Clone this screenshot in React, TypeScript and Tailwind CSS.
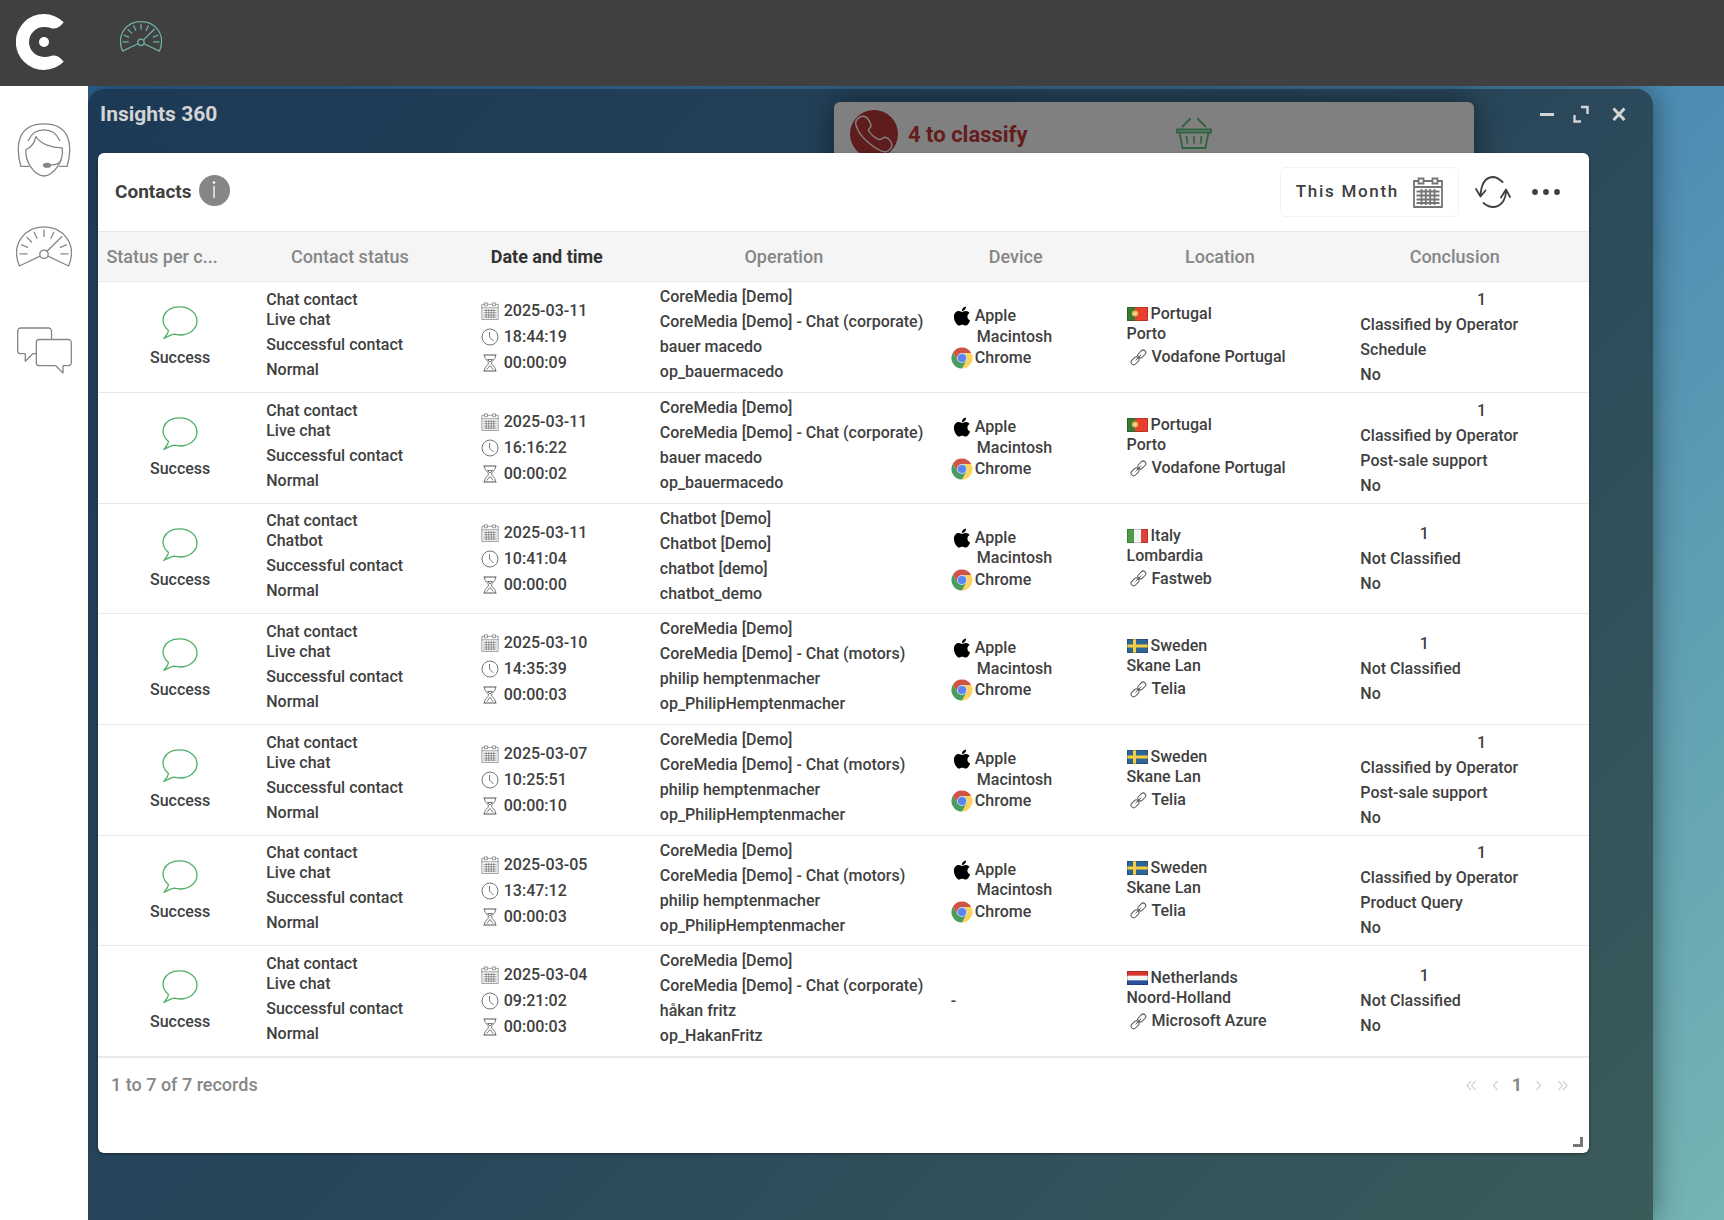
import React from 'react';
import { FaApple } from 'react-icons/fa';

type Country = 'pt' | 'it' | 'se' | 'nl';

interface Contact {
  channel: string;
  date: string;
  time: string;
  duration: string;
  operation: string[];
  device: boolean;
  country: Country;
  region: string;
  network: string;
  conclusion: string[];
}

const countryNames: Record<Country, string> = {
  pt: 'Portugal',
  it: 'Italy',
  se: 'Sweden',
  nl: 'Netherlands'
};

const corporate = ['CoreMedia [Demo]', 'CoreMedia [Demo] - Chat (corporate)'];
const motors = ['CoreMedia [Demo]', 'CoreMedia [Demo] - Chat (motors)'];
const bauer = [...corporate, 'bauer macedo', 'op_bauermacedo'];
const philip = [...motors, 'philip hemptenmacher', 'op_PhilipHemptenmacher'];

const contacts: Contact[] = [
  { channel: 'Live chat', date: '2025-03-11', time: '18:44:19', duration: '00:00:09', operation: bauer, device: true, country: 'pt', region: 'Porto', network: 'Vodafone Portugal', conclusion: ['Classified by Operator', 'Schedule', 'No'] },
  { channel: 'Live chat', date: '2025-03-11', time: '16:16:22', duration: '00:00:02', operation: bauer, device: true, country: 'pt', region: 'Porto', network: 'Vodafone Portugal', conclusion: ['Classified by Operator', 'Post-sale support', 'No'] },
  { channel: 'Chatbot', date: '2025-03-11', time: '10:41:04', duration: '00:00:00', operation: ['Chatbot [Demo]', 'Chatbot [Demo]', 'chatbot [demo]', 'chatbot_demo'], device: true, country: 'it', region: 'Lombardia', network: 'Fastweb', conclusion: ['Not Classified', 'No'] },
  { channel: 'Live chat', date: '2025-03-10', time: '14:35:39', duration: '00:00:03', operation: philip, device: true, country: 'se', region: 'Skane Lan', network: 'Telia', conclusion: ['Not Classified', 'No'] },
  { channel: 'Live chat', date: '2025-03-07', time: '10:25:51', duration: '00:00:10', operation: philip, device: true, country: 'se', region: 'Skane Lan', network: 'Telia', conclusion: ['Classified by Operator', 'Post-sale support', 'No'] },
  { channel: 'Live chat', date: '2025-03-05', time: '13:47:12', duration: '00:00:03', operation: philip, device: true, country: 'se', region: 'Skane Lan', network: 'Telia', conclusion: ['Classified by Operator', 'Product Query', 'No'] },
  { channel: 'Live chat', date: '2025-03-04', time: '09:21:02', duration: '00:00:03', operation: [...corporate, 'håkan fritz', 'op_HakanFritz'], device: false, country: 'nl', region: 'Noord-Holland', network: 'Microsoft Azure', conclusion: ['Not Classified', 'No'] }
];

const Logo = () => (
  <svg width="48" height="56" viewBox="16 14 48 56" fill="#fff">
    <path d="M63.7 22.3A28 28 0 1 0 63.7 61.7C60 57 56.5 54.3 51.5 55.8C48 57 46 57 44 57A15 15 0 0 1 44 27C46 27 48 27 51.5 28.2C56.5 29.7 60 27 63.7 22.3Z" />
    <circle cx="44" cy="42" r="5" />
  </svg>
);

const GaugeIcon = ({ className, strokeWidth }: { className: string; strokeWidth: number }) => (
  <svg className={className} viewBox="0 0 56 41" fill="none" stroke="currentColor" strokeWidth={strokeWidth} strokeLinecap="round" strokeLinejoin="round">
    <path d="M24 30.2L3.4 40C-6 17 10 .8 28 .8S62 17 52.6 40L32 30.2" />
    <circle cx="28" cy="28.3" r="4.2" />
    <path d="M31 25.3L45.8 10.8M4 27.8h7M45 27.8h7M5.6 18.8l6 2.5M50.4 18.8l-6 2.5M10.8 11.4l4.8 4.6M18.2 6.2l2.8 6M28 4v6.6M37.8 6.2l-2.8 6" />
  </svg>
);

const AgentIcon = () => (
  <svg className="h-[54px] w-[54px]" viewBox="0 0 54 54" fill="none" stroke="currentColor" strokeWidth="1.3" strokeLinejoin="round" strokeLinecap="round">
    <path d="M12 43.3H3.8C-2 22 1 .8 27 .8S56 22 50.2 43.3H42.5" />
    <path d="M11.3 17.5C14.5 10 20 6.8 27 6.8S39.5 10 42.7 17.5" />
    <path d="M19 13.5C17.5 20 14.5 24.5 9 26.5C7.5 39 18 53 27 53S47 39 45.3 24.8C35 25 24 21.5 19 13.5Z" />
    <path d="M33 42.2C39 41.5 42.5 41 44.2 37" />
    <ellipse cx="30" cy="42.3" rx="3.5" ry="1.9" fill="currentColor" />
  </svg>
);

const ChatsIcon = () => (
  <svg className="h-[47px] w-[55px]" viewBox="0 0 55 47" fill="none" stroke="currentColor" strokeWidth="1.3" strokeLinejoin="round">
    <path d="M34.5 12.5V4a3 3 0 0 0-3-3H3.7a3 3 0 0 0-3 3v19.7a3 3 0 0 0 3 3H8.3V34.3L15.8 26.7H19.3" />
    <path d="M22.3 12.5H51.3a3 3 0 0 1 3 3V35.7a3 3 0 0 1-3 3H46V46L38.8 38.7H22.3a3 3 0 0 1-3-3V15.5a3 3 0 0 1 3-3Z" />
  </svg>
);

const PhoneIcon = () => (
  <svg className="size-12" viewBox="0 0 48 48" fill="none">
    <circle cx="24" cy="24" r="24" fill="#5e1c1c" />
    <path d="M6 11C8 8 11 5.5 14.5 6.5C17.5 7.5 20 12 21 15C21.5 18 18 18.5 18.5 20.5C20 24 25 28 29 29.5C32 30 33 26.5 36 27.5C39 28.5 41.5 32 42 35C41.5 39 38 41.5 35 42C27 41 11 28 7.5 19C6 16 5 13.5 6 11Z" stroke="#808080" strokeWidth="1.5" />
  </svg>
);

const BasketIcon = () => (
  <svg className="h-8 w-9" viewBox="0 0 36 32" fill="none" stroke="#2f6340" strokeWidth="1.8">
    <path d="M6 10L14.5 1.5M30 10L21.5 1.5M1 12.5h34v3H1zM3.5 15.5L6.5 31H29.5L32.5 15.5M10.5 19l.8 7.5M18 19v7.5M25.5 19l-.8 7.5" />
  </svg>
);

const CalendarIcon = ({ className, strokeWidth = 1 }: { className: string; strokeWidth?: number }) => (
  <svg className={className} viewBox="0 0 30 31" fill="none" stroke="currentColor" strokeWidth={strokeWidth}>
    <path d="M5.5 4H1v26h28V4h-4.5M10.5 4h9M1 10h28" />
    <path d="M5.5 1.5h5v5h-5zM19.5 1.5h5v5h-5z" />
    <path d="M3.5 14.5h23M3.5 18.5h23M3.5 22.5h23M8.5 12v16M12.8 12v16M17.2 12v16M21.5 12v16M3.5 26h23" />
  </svg>
);

const RefreshIcon = () => (
  <svg className="h-8 w-9" viewBox="0 0 36 32" fill="none" stroke="currentColor" strokeWidth="1.8" strokeLinecap="round" strokeLinejoin="round">
    <path d="M27.5 6C24 2.5 20.5 1 17.5 1C10.5 1.5 6 8 5.5 20.5M1 13L5.5 20.5L10.5 14.5M8.5 27C12 30 14.5 31 18 31C25 31 31 25 31 14M26 21.5L31 13.5L35 21" />
  </svg>
);

const BubbleIcon = () => (
  <svg className="h-[34px] w-9" viewBox="0 0 36 34" fill="none" stroke="#4fae68" strokeWidth="1.3" strokeLinejoin="round">
    <path d="M6.5 24.5C-3 17.5 -.5 .8 18 .8C27.5 .8 35 7 35 15S27.5 29 18 29C15.8 28.8 14 28.5 12.3 28.2C8.5 29 5 30.8 1.8 32.5C3 30.5 6 28.5 6.5 24.5Z" />
  </svg>
);

const ClockIcon = () => (
  <svg className="size-[18px]" viewBox="0 0 18 18" fill="none" stroke="#666" strokeWidth="0.9">
    <circle cx="9" cy="9" r="8" />
    <path d="M8.5 4v5l4 4" />
  </svg>
);

const HourglassIcon = () => (
  <svg className="size-[18px]" viewBox="0 0 18 18" fill="none" stroke="#555" strokeWidth="0.8">
    <path d="M3.5 1V2C3.5 5.5 7.5 7 7.5 9S3.500 12.500 3.500 16V17M14.500 1V2C14.500 5.500 10.500 7 10.500 9S14.500 12.500 14.500 16V17M5.800 15.500L9 11.500L12.200 15.500M6.500 5.500h5L9 8Z" />
    <path d="M2.5 1h13M2.5 17h13" strokeWidth="1.2" />
  </svg>
);

const LinkIcon = () => (
  <svg className="size-[17px]" viewBox="0 0 17 17" fill="none" stroke="#555" strokeWidth="1">
    <rect x="-4.5" y="-2.6" width="9" height="5.2" rx="2.6" transform="translate(11.8 5) rotate(-45)" />
    <rect x="-4.5" y="-2.6" width="9" height="5.2" rx="2.6" transform="translate(5 11.8) rotate(-45)" />
    <path d="M5.5 11.3L11.3 5.6" />
  </svg>
);

const ChromeIcon = () => (
  <svg className="size-[22px]" viewBox="1 1 46 46">
    <path fill="#cf5446" d="M4.9 13A22 22 0 0 1 43.1 13.5H24L15 29Z" />
    <path fill="#fbd35d" d="M43.1 13.5A22 22 0 0 1 23 46L33 29L24 13.5Z" />
    <path fill="#4a9c5f" d="M24 46A22 22 0 0 1 4.9 13L15 29L33 29Z" />
    <circle cx="24" cy="24" r="10.5" fill="#c9d8f5" />
    <circle cx="24" cy="24" r="8.5" fill="#5885ee" />
  </svg>
);

const Flag = ({ country }: { country: Country }) => (
  <svg className="h-3.5 w-[21px]" viewBox="0 0 21 15" preserveAspectRatio="none" aria-hidden="true">
    {country === 'pt' && (
      <>
        <path fill="#e8402f" d="M0 0h21v15H0z" />
        <path fill="#3a7a33" d="M0 0h8v15H0z" />
        <circle cx="8" cy="7" r="3.2" fill="#e9b84a" />
        <circle cx="8" cy="7" r="1.5" fill="#f0d9d0" />
      </>
    )}
    {country === 'it' && (
      <>
        <path fill="#f4f4f4" d="M0 0h21v15H0z" />
        <path fill="#4b9c45" d="M0 0h7v15H0z" />
        <path fill="#e0403a" d="M14 0h7v15h-7z" />
      </>
    )}
    {country === 'se' && (
      <>
        <path fill="#2f6595" d="M0 0h21v15H0z" />
        <path fill="#f5cf3f" d="M6 0h3v15H6zM0 6h21v3H0z" />
      </>
    )}
    {country === 'nl' && (
      <>
        <path fill="#f4f4f4" d="M0 0h21v15H0z" />
        <path fill="#d8352f" d="M0 0h21v5H0z" />
        <path fill="#2b4f9a" d="M0 10h21v5H0z" />
      </>
    )}
    <path d="M.5.5h20v14H.5z" fill="none" stroke="#000" strokeOpacity=".2" />
  </svg>
);

const ContactRow: React.FC<{ contact: Contact }> = ({ contact }) => (
  <tr className="h-[111px] border-b border-[#e9e9e9] nth-[3n]:h-[110px]">
    <td className="pl-9">
      <div className="flex flex-col items-center gap-2">
        <BubbleIcon />
        <span>Success</span>
      </div>
    </td>
    <td className="pl-10">
      <p>Chat contact</p>
      <p className="mb-[5px]">{contact.channel}</p>
      <p className="mb-[5px]">Successful contact</p>
      <p className="mb-[5px]">Normal</p>
    </td>
    <td className="pl-[7px]">
      <p className="flex h-[26px] items-center gap-[5px]">
        <CalendarIcon className="size-[18px] text-[#555]" />
        {contact.date}
      </p>
      <p className="flex h-[26px] items-center gap-[5px]">
        <ClockIcon />
        {contact.time}
      </p>
      <p className="flex h-[26px] items-center gap-[5px]">
        <HourglassIcon />
        {contact.duration}
      </p>
    </td>
    <td className="pl-10">
      {contact.operation.map((line, i) => (
        <p key={i} className="mb-[5px]">{line}</p>
      ))}
    </td>
    <td className="pl-[3px]">
      {contact.device ? (
        <>
          <p className="flex h-[21px] items-center gap-0.5">
            <FaApple className="size-[22px] text-black" />
            Apple
          </p>
          <p className="h-[21px] pl-[26px]">Macintosh</p>
          <p className="flex h-[21px] items-center gap-0.5">
            <ChromeIcon />
            Chrome
          </p>
        </>
      ) : (
        <p>-</p>
      )}
    </td>
    <td className="pl-[43px]">
      <p className="flex items-center gap-[3px]">
        <Flag country={contact.country} />
        {countryNames[contact.country]}
      </p>
      <p>{contact.region}</p>
      <p className="my-[3px] flex items-center gap-[5px] pl-[3px]">
        <LinkIcon />
        {contact.network}
      </p>
    </td>
    <td className="pt-[5px] pl-1">
      <div className="inline-block align-middle">
        <p className="mb-[5px] pr-8 text-right">1</p>
        {contact.conclusion.map((line) => (
          <p key={line} className="mb-[5px]">{line}</p>
        ))}
      </div>
    </td>
  </tr>
);

const ContactsPanel = () => (
  <section className="relative mr-16 ml-2.5 rounded-md bg-white text-[#404040] shadow-[0_1px_3px_rgba(0,0,0,0.4)]">
    <header className="flex h-[78px] items-center justify-between pr-7 pl-[17px]">
      <div className="flex items-center gap-[7px]">
        <h2 className="text-[19px] font-bold">Contacts</h2>
        <button type="button" aria-label="About contacts" className="mb-1 flex size-[31px] items-center justify-center rounded-full bg-[#868686]">
          <svg width="4" height="18" viewBox="0 0 4 18" fill="#fff">
            <path d="M1.4 5h1.300v12H1.400z" />
            <circle cx="2" cy="1.5" r="1.3" />
          </svg>
        </button>
      </div>
      <div className="flex items-center">
        <button type="button" className="flex h-[50px] items-center gap-3.5 rounded-md border border-[#f3f3f3] px-[15px]">
          <span className="text-[17px] font-medium tracking-widest">This Month</span>
          <CalendarIcon className="h-[31px] w-[30px] text-[#757575]" strokeWidth={1.8} />
        </button>
        <button type="button" aria-label="Refresh" className="ml-4">
          <RefreshIcon />
        </button>
        <button type="button" aria-label="More options" className="ml-5">
          <svg width="30" height="8" viewBox="0 0 30 8" fill="currentColor">
            <circle cx="4" cy="4" r="2.9" />
            <circle cx="15" cy="4" r="2.9" />
            <circle cx="26" cy="4" r="2.9" />
          </svg>
        </button>
      </div>
    </header>

    <table className="w-full table-fixed border-collapse text-left text-base leading-5 font-medium">
      <thead>
        <tr className="h-[50px] border-y border-[#e9e9e9] bg-[#f5f5f5] text-lg text-[#868686] [&>th]:text-center [&>th]:font-medium">
          <th className="w-[8.6%] whitespace-nowrap">Status per c...</th>
          <th className="w-[16.6%]">Contact status</th>
          <th className="w-[9.8%] text-[#333]">
            <span className="font-bold">Date and time</span>
          </th>
          <th className="w-[22%]">Operation</th>
          <th className="w-[9.1%]">Device</th>
          <th className="w-[18.3%]">Location</th>
          <th className="pr-9">Conclusion</th>
        </tr>
      </thead>
      <tbody>
        {contacts.map((contact, i) => (
          <ContactRow key={i} contact={contact} />
        ))}
      </tbody>
    </table>

    <footer className="flex h-24 items-start justify-between border-t border-[#e9e9e9] pt-[15px] pr-[21px] pl-[13px] text-lg leading-6 text-[#868686]">
      <span className="font-medium">1 to 7 of 7 records</span>
      <nav aria-label="Pages" className="flex items-center text-[#d5d5d5]">
        <button type="button" aria-label="First page" className="mr-4">
          <svg width="10" height="12" viewBox="0 0 10 12" fill="none" stroke="currentColor" strokeWidth="1.3"><path d="M5 2L1 6.5L5 11M9.5 2L5.5 6.5L9.5 11" /></svg>
        </button>
        <button type="button" aria-label="Previous page" className="mr-3.5">
          <svg width="6" height="12" viewBox="0 0 6 12" fill="none" stroke="currentColor" strokeWidth="1.3"><path d="M5.5 2L1.5 6.5L5.5 11" /></svg>
        </button>
        <button type="button" aria-current="page" className="mr-3.5 font-bold text-[#868686]">1</button>
        <button type="button" aria-label="Next page" className="mr-4">
          <svg width="6" height="12" viewBox="0 0 6 12" fill="none" stroke="currentColor" strokeWidth="1.3"><path d="M.5 2L4.5 6.5L.5 11" /></svg>
        </button>
        <button type="button" aria-label="Last page">
          <svg width="10" height="12" viewBox="0 0 10 12" fill="none" stroke="currentColor" strokeWidth="1.3"><path d="M.5 2L4.5 6.5L.5 11M5 2L9 6.5L5 11" /></svg>
        </button>
      </nav>
    </footer>
    {/* Resize handle */}
    <span className="absolute right-1.5 bottom-1.5 size-2.5 border-r-[3px] border-b-[3px] border-[#777]"></span>
  </section>
);

const App: React.FC = () => (
  <div className="flex min-h-screen flex-col bg-[linear-gradient(135deg,#2b5f92,#4e8db3_61%,#76b5b3)] font-['Roboto',sans-serif]">
    <header className="relative z-10 flex h-[86px] items-center bg-[#404040]">
      <a href="#" aria-label="Home" className="flex w-[88px] justify-center pr-2 pb-0.5">
        <Logo />
      </a>
      <button type="button" aria-label="Insights" className="mb-3.5 ml-8 text-[#6fb0a6]">
        <GaugeIcon className="h-[31px] w-[42px]" strokeWidth={1.7} />
      </button>
    </header>

    <div className="flex flex-1">
      <nav className="relative z-10 flex w-[88px] shrink-0 flex-col items-center bg-white pt-[37px] text-[#868686]">
        <a href="#" aria-label="Agents" className="mb-[49px]"><AgentIcon /></a>
        <a href="#" aria-label="Dashboards" className="mb-[60px]"><GaugeIcon className="h-[41px] w-14" strokeWidth={1.3} /></a>
        <a href="#" aria-label="Conversations"><ChatsIcon /></a>
      </nav>

      <main className="relative mt-[3px] mr-[71px] flex-1 rounded-t-2xl bg-[linear-gradient(135deg,#1c3956,#28465a_50%,#3b5b5b)] shadow-[0_0_30px_rgba(0,0,0,0.45)]">
        {/* Dimmed card that sits behind the open panel */}
        <div className="absolute top-[13px] right-[179px] flex h-20 w-[640px] items-start gap-2.5 rounded-md bg-[#808080] pt-2 pl-4 shadow-[0_0_30px_rgba(0,0,0,0.5)]">
          <PhoneIcon />
          <span className="text-[22px] leading-[50px] font-bold text-[#641c1c]">4 to classify</span>
          <span className="mt-[7px] ml-[138px]"><BasketIcon /></span>
        </div>

        <div className="relative flex h-16 items-start justify-between pt-2.5 pr-[26px] pl-3 text-[#d4d4d4]">
          <h1 className="text-[21px] leading-[30px] font-bold">Insights 360</h1>
          <div className="flex h-[29px] items-center">
            <button type="button" aria-label="Minimize" className="mr-[18px]">
              <svg width="16" height="18" viewBox="0 0 16 18"><path d="M1 9.5h14" stroke="currentColor" strokeWidth="3" /></svg>
            </button>
            <button type="button" aria-label="Expand" className="mr-[22px]">
              <svg width="16" height="18" viewBox="0 0 16 18" fill="none" stroke="currentColor" strokeWidth="2.4"><path d="M8 2H14.500V9M1.500 10V16.500H8" /></svg>
            </button>
            <button type="button" aria-label="Close">
              <svg width="16" height="18" viewBox="0 0 16 18"><path d="M2.5 3.5L13.5 15M13.5 3.5L2.5 15" stroke="currentColor" strokeWidth="3" /></svg>
            </button>
          </div>
        </div>

        <ContactsPanel />
      </main>
    </div>
  </div>
);

export default App;
